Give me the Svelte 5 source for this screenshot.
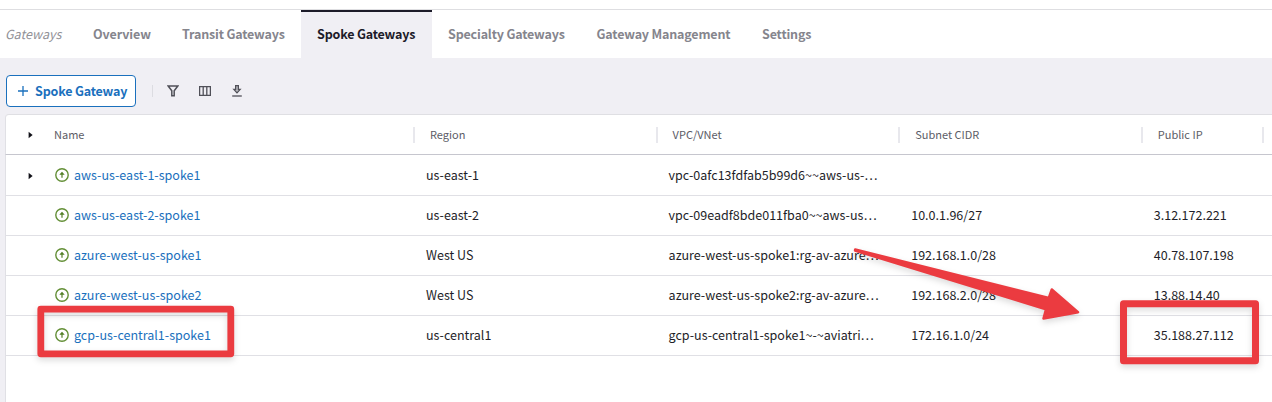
<script>
  const tabs = [
    { label: 'Overview', width: 89 },
    { label: 'Transit Gateways', width: 135 },
    { label: 'Spoke Gateways', width: 131, active: true },
    { label: 'Specialty Gateways', width: 148.5 },
    { label: 'Gateway Management', width: 165.5 },
    { label: 'Settings', width: 82 }
  ];
  const columns = ['Region', 'VPC/VNet', 'Subnet CIDR', 'Public IP'];
  const rows = [
    { name: 'aws-us-east-1-spoke1', cells: ['us-east-1', 'vpc-0afc13fdfab5b99d6~~aws-us-…', '', ''], open: true },
    { name: 'aws-us-east-2-spoke1', cells: ['us-east-2', 'vpc-09eadf8bde011fba0~~aws-us…', '10.0.1.96/27', '3.12.172.221'] },
    { name: 'azure-west-us-spoke1', cells: ['West US', 'azure-west-us-spoke1:rg-av-azure…', '192.168.1.0/28', '40.78.107.198'] },
    { name: 'azure-west-us-spoke2', cells: ['West US', 'azure-west-us-spoke2:rg-av-azure…', '192.168.2.0/28', '13.88.14.40'] },
    { name: 'gcp-us-central1-spoke1', cells: ['us-central1', 'gcp-us-central1-spoke1~-~aviatri…', '172.16.1.0/24', '35.188.27.112'] }
  ];
</script>

{#snippet caret()}
  <svg class="caret" width="6" height="8" viewBox="0 0 6 8"><path d="M.6 .8 4.6 4 .6 7.2z" fill="#111118" /></svg>
{/snippet}

<div class="page">
  <nav>
    <span class="title">Gateways</span>
    {#each tabs as tab}
      <span class="tab" class:active={tab.active} style:width="{tab.width}px">{tab.label}</span>
    {/each}
  </nav>
  <div class="toolbar">
    <button>
      <svg width="10" height="10" viewBox="0 0 10 10"><path d="M5 0v10M0 5h10" stroke="#1a70bd" stroke-width="1.3" /></svg>
      <span>Spoke Gateway</span>
    </button>
    <i class="divider"></i>
    <svg class="tool" width="12" height="12" viewBox="0 0 12 12"><path d="M1.2 1h9.6L7.2 5.8V10.7H4.8V5.8z" fill="none" stroke="#505058" stroke-width="1.5" /></svg>
    <svg class="tool" width="12" height="12" viewBox="0 0 12 12"><path d="M.6 1.6h10.8v8.8H.6zM4.2 1.6v8.8M7.8 1.6v8.8" fill="none" stroke="#505058" stroke-width="1.3" /></svg>
    <svg class="tool" width="12" height="12" viewBox="0 0 12 12"><path d="M4.6 .6h2.8v3.8h1.8L6 7.8 2.8 4.4h1.8z" fill="#b5b5ba" stroke="#505058" stroke-width="1.2" /><path d="M1.2 11h9.6" stroke="#505058" stroke-width="1.3" /></svg>
  </div>
  <div class="table">
    <div class="row head">
      <span class="expand">{@render caret()}</span>
      <span class="name">Name</span>
      {#each columns as column}<span class="cell">{column}</span>{/each}
      <span class="end"></span>
    </div>
    {#each rows as row}
      <div class="row">
        <span class="expand">{#if row.open}{@render caret()}{/if}</span>
        <span class="name">
          <svg class="status" width="14" height="14" viewBox="0 0 14 14"><circle cx="7" cy="7" r="6.2" fill="none" stroke="#638f36" stroke-width="1.4" /><path d="M7 3.7 9.7 6.8H7.6V9.8H6.4V6.8H4.3z" fill="#527f26" /></svg>
          <a>{row.name}</a>
        </span>
        {#each row.cells as cell}<span class="cell">{cell}</span>{/each}
      </div>
    {/each}
  </div>
  <svg class="marks" width="1272" height="402" viewBox="0 0 1272 402">
    <g stroke="#eb3b40" stroke-linejoin="round">
      <rect x="40.8" y="309.2" width="190" height="44.6" fill="none" stroke-width="6.8" />
      <rect x="1123.5" y="303.7" width="132" height="57" fill="none" stroke-width="7" />
      <path d="M855.2 249.5 1048.8 298 1051.8 289.5 1078 312.2 1043.5 318.5 1046 309.3 855 250.5z" fill="#eb3b40" stroke-width="2.5" />
    </g>
  </svg>
</div>

<style>
  :global(body) { margin: 0; overflow: hidden; }
  .page { position: relative; width: 1272px; height: 402px; overflow: hidden; box-sizing: border-box; padding-top: 9px; background: #fff; font-family: "Noto Sans CJK SC", "Noto Sans", sans-serif; font-size: 12.53px; color: #1e1e28; display: flex; flex-direction: column; }
  span { white-space: nowrap; }
  nav { display: flex; flex: none; height: 49px; border-top: 1px solid #dedee1; box-sizing: border-box; line-height: 47px; }
  .title { box-sizing: border-box; width: 77px; padding-left: 5px; font-style: italic; color: #919197; }
  .tab { box-sizing: border-box; padding-left: 16px; font-weight: 700; font-size: 12.5px; letter-spacing: -.17px; color: #85858d; }
  .tab:nth-child(2) { letter-spacing: -.1px; }
  .tab.active { background: #f0eff4; color: #1c1b29; border-top: 2px solid #1c1b29; line-height: 43px; }
  .toolbar { flex: none; height: 47px; background: #f0eff4; display: flex; align-items: center; padding: 9px 6px 0; }
  button { width: 130px; height: 32px; box-sizing: border-box; border: 1px solid #1a70bd; border-radius: 4px; background: #fff; color: #1a70bd; font: 700 12.5px "Noto Sans CJK SC", sans-serif; letter-spacing: -.17px; display: flex; align-items: center; padding: 0 0 0 11px; gap: 7px; }
  .divider { width: 1px; height: 12px; background: #dcdce1; margin: 0 -2px 0 16px; }
  .tool { margin: 0 4px 0 16px; }
  .table { flex: 1; border-left: 5px solid #f0eff4; background: #f0eff4; display: flex; flex-direction: column; }
  .table::after { content: ""; flex: 1; background: #fff; border-left: 1px solid #e0e0e5; }
  .row { display: flex; align-items: center; height: 40px; box-sizing: border-box; border-left: 1px solid #e0e0e5; border-bottom: 1px solid #e0e0e5; background: #fff; }
  .head { height: 41px; border-top: 1px solid #dfdfe3; border-bottom-color: #c6c6ce; border-radius: 4px 0 0; font-size: 11px; color: #5c5c66; }
  .expand { width: 48px; flex: none; display: flex; }
  .caret { margin-left: 21.6px; }
  .name { width: 372px; flex: none; display: flex; align-items: center; gap: 5px; }
  .row:not(.head) .name { box-sizing: border-box; padding-left: 1px; width: 372px; }
  .status { margin-bottom: 1px; }
  a { color: #1a70bd; line-height: 16px; padding-bottom: 2px; }
  .cell { width: 242.6px; flex: none; line-height: 16px; padding-bottom: 2px; }
  .head + .row { height: 41px; padding-top: 1px; }
  .head .name { box-sizing: border-box; width: 359px; line-height: 16px; padding-bottom: 2px; }
  .head .cell { box-sizing: border-box; height: 16px; border-left: 2px solid #e8e8ed; padding: 0 0 0 15px; line-height: 14px; }
  .head .cell:nth-last-child(2) { width: 121px; }
  .end { width: 2px; height: 16px; background: #e8e8ed; }
  .marks { position: absolute; inset: 0; filter: drop-shadow(0 3px 3px rgba(0, 0, 0, .14)); }
</style>
